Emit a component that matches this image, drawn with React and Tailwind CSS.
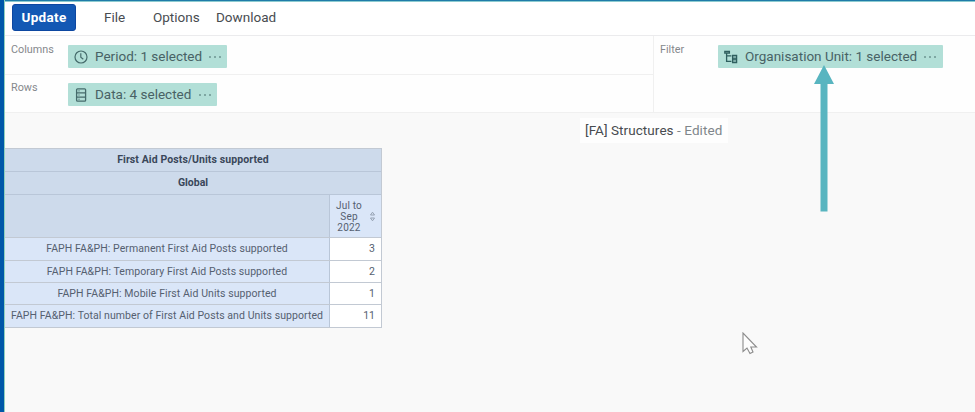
import React from "react";

function ClockIcon() {
  return (
    <svg width="14" height="14" viewBox="0 0 14 14" fill="none" stroke="#456b6b" strokeWidth="1.2">
      <circle cx="7" cy="7" r="6" />
      <path d="M6.800 3.200V7.300L9.300 9.200" />
    </svg>
  );
}

function DataIcon() {
  return (
    <svg width="14" height="14" viewBox="0 0 14 14" fill="none" stroke="#456b6b" strokeWidth="1.3">
      <rect x="2.600" y="0.800" width="9" height="12.400" rx="1" />
      <path d="M2.600 4.900H11.600M2.600 9.100H11.600" />
      <path d="M4.400 2.900h1.200M4.400 7h1.200M4.400 11.200h1.200" strokeWidth="1" />
    </svg>
  );
}

function OrgUnitIcon() {
  return (
    <svg width="14" height="14" viewBox="0 0 14 14" fill="none" stroke="#2f5f5f" strokeWidth="1.3">
      <path d="M0.800 1.300H5.400V3H0.800zM2.600 3.400V11.400H7.400M2.600 5.800H7.400" />
      <path d="M8.600 5.400H12.600V12.600H8.600zM8.600 9H12.600" fill="#7fada9" />
    </svg>
  );
}

function Chip({ icon, label, className, textClass }) {
  return (
    <div className={`flex h-[23px] items-center rounded-[1px] bg-[#b2dfd7] pl-[6px] ${className}`}>
      {icon}
      <span className={`ml-[7px] whitespace-nowrap text-[13.5px] leading-none text-[#486265] ${textClass}`}>{label}</span>
      <span className="ml-[7px] flex gap-[3px]">
        <i className="size-[2px] rounded-full bg-[#6c9491]" />
        <i className="size-[2px] rounded-full bg-[#6c9491]" />
        <i className="size-[2px] rounded-full bg-[#6c9491]" />
      </span>
    </div>
  );
}

const rows = [
  { label: "FAPH FA&PH: Permanent First Aid Posts supported", value: 3, height: "h-[23px]", pad: "" },
  { label: "FAPH FA&PH: Temporary First Aid Posts supported", value: 2, height: "h-[22px]", pad: "pt-px" },
  { label: "FAPH FA&PH: Mobile First Aid Units supported", value: 1, height: "h-[22px]", pad: "pt-px" },
  { label: "FAPH FA&PH: Total number of First Aid Posts and Units supported", value: 11, height: "h-[23px]", pad: "" },
];

function PivotTable() {
  return (
    <div className="w-[377px] border-t border-r border-[#c2c9d3] text-[10.5px] leading-none text-[#556070]">
      <div className="flex h-[23px] items-center justify-center border-b border-[#b9c6d8] bg-[#cddaeb] font-bold text-[#3a475a]">
        <span className="tracking-[0.1px]">First Aid Posts/Units supported</span>
      </div>
      <div className="flex h-[23px] items-center justify-center border-b border-[#b9c6d8] bg-[#cddaeb] font-bold text-[#3a475a]">
        Global
      </div>
      <div className="flex h-[43px] border-b border-[#c2c9d3]">
        <div className="w-[325px] border-r border-[#b9c6d8] bg-[#cddaeb]" />
        <div className="flex flex-1 items-center bg-[#dae6f8]">
          <div className="w-[38px] text-center text-[10px] leading-[11px] tracking-[0.2px]">Jul to<br />Sep<br />2022</div>
          <svg className="ml-[1px]" width="7" height="11" viewBox="0 0 7 11" fill="none" stroke="#8f9bab" strokeWidth="0.9">
            <path d="M1.500 4L3.500 1.200L5.500 4zM1.500 7L3.500 9.800L5.500 7z" />
          </svg>
        </div>
      </div>
      {rows.map((r) => (
        <div key={r.label} className={`flex border-b border-[#c2c9d3] ${r.height}`}>
          <div className={`flex w-[325px] items-center justify-center border-r border-[#b9c6d8] bg-[#dae6f8] tracking-[0.07px] whitespace-nowrap ${r.pad}`}>
            {r.label}
          </div>
          <div className={`flex flex-1 items-center justify-end bg-white pr-[6px] ${r.pad}`}>{r.value}</div>
        </div>
      ))}
    </div>
  );
}

export default function App() {
  return (
    <div className="relative flex h-[412px] w-[975px] overflow-hidden bg-[#f9f9f9] font-['Roboto',sans-serif]">
      <div className="w-[4px] shrink-0 bg-[#0057a8]" />
      <div className="w-px shrink-0 bg-[#8fd0bd]" />
      <div className="flex min-w-0 flex-1 flex-col">
        <div className="h-[2px] shrink-0 border-b border-[#8ccbd0] bg-[#1f7ca8]" />
        <nav className="flex h-[34px] shrink-0 items-center border-b border-[#ebebed] bg-white pb-[2px] text-[13.5px] leading-none text-[#484c51]">
          <button className="ml-[7px] h-[27px] w-[64px] rounded-[3px] border border-[#0d47a1] bg-[#1358b4] font-bold tracking-[0.3px] text-white">
            Update
          </button>
          <span className="ml-[28px] w-[49px]">File</span>
          <span className="w-[63px]">Options</span>
          <span>Download</span>
        </nav>
        <section className="flex h-[77px] shrink-0 border-b border-[#f0f0f0] bg-[#fefefe] text-[10.8px] leading-none text-[#85888c]">
          <div className="flex w-[649px] flex-col border-r border-[#f0f0f0]">
            <div className="flex h-[39px] border-b border-[#f0f0f0] pt-[9px]">
              <span className="ml-[6px] w-[57px]">Columns</span>
              <Chip icon={<ClockIcon />} label="Period: 1 selected" className="w-[159px]" textClass="w-[107px]" />
            </div>
            <div className="flex flex-1 pt-[8px]">
              <span className="ml-[6px] w-[57px]">Rows</span>
              <Chip icon={<DataIcon />} label="Data: 4 selected" className="w-[149px]" textClass="w-[97px]" />
            </div>
          </div>
          <div className="flex flex-1 pt-[9px]">
            <span className="ml-[6px] w-[58px]">Filter</span>
            <Chip icon={<OrgUnitIcon />} label="Organisation Unit: 1 selected" className="w-[225px]" textClass="w-[172px]" />
          </div>
        </section>
        <main className="flex flex-1 flex-col">
          <div className="mt-[5px] ml-[575px] flex h-[25px] w-[148px] items-center bg-[#fefefe] pl-[5px] text-[13.5px] leading-none tracking-[0.07px] whitespace-pre text-[#484c50]">
            [FA] Structures<span className="text-[#80868b]"> - Edited</span>
          </div>
          <div className="mt-[5px]">
            <PivotTable />
          </div>
        </main>
      </div>
      <svg className="absolute top-[64px] left-[813px]" width="22" height="148" viewBox="0 0 22 148" fill="#58b5c0">
        <path d="M11 1L21 20H14.500V147.500H7.500V20H1z" />
      </svg>
      <svg className="absolute top-[332px] left-[742px]" width="16" height="24" viewBox="0 0 16 24">
        <path d="M1 1V19.500L5 16L8 21.500L11 20L8.800 15H14.500z" fill="#fdfdfd" stroke="#8c8c8c" strokeWidth="1.1" />
      </svg>
    </div>
  );
}
